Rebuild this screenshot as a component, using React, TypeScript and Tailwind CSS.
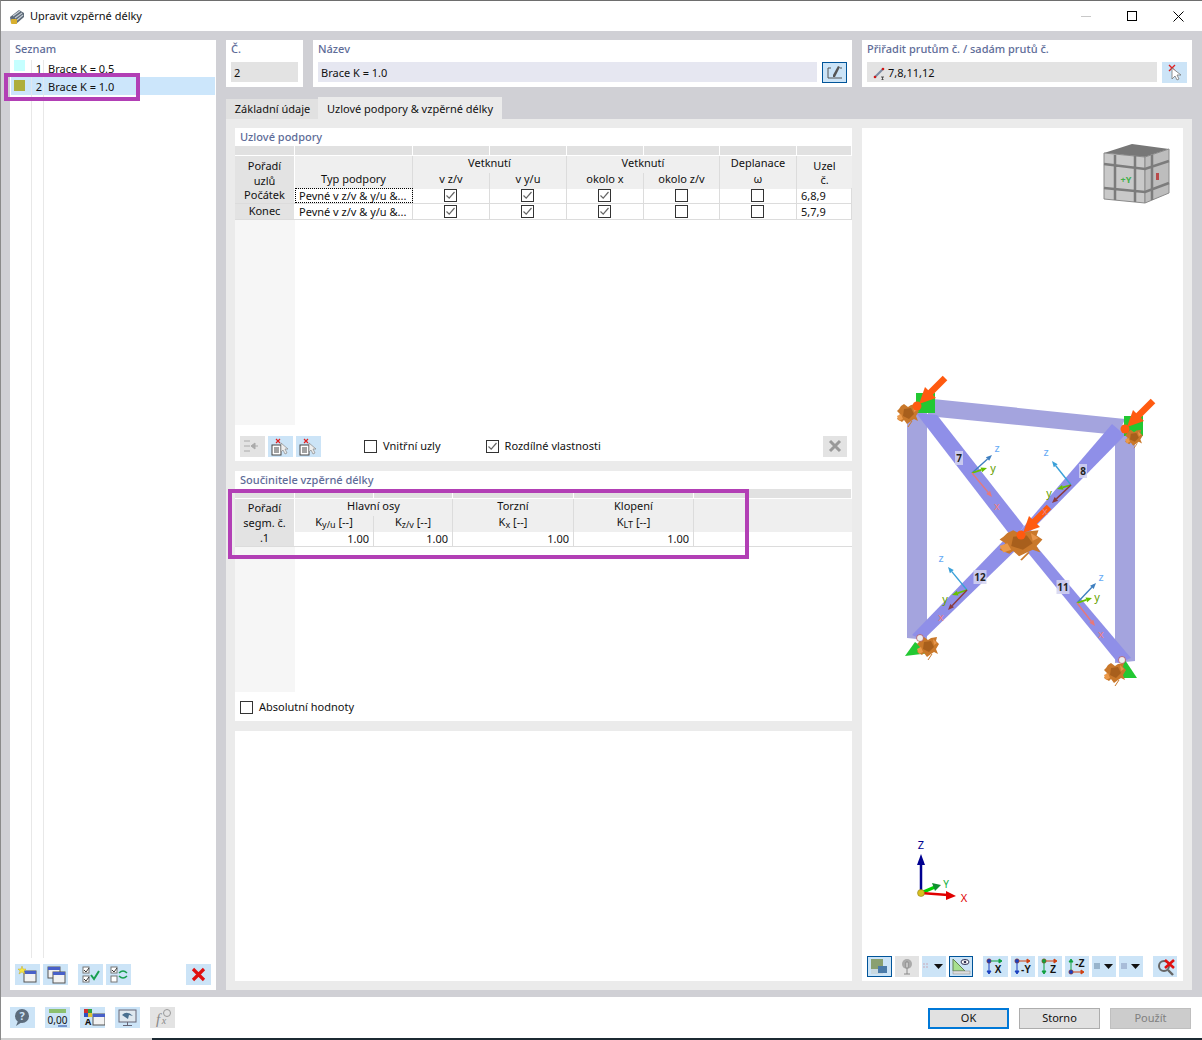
import type { ReactNode } from 'react'

const FONT = "font-['Noto_Sans',sans-serif]"
const LABEL = 'text-[11px] leading-[18px] font-medium text-[#5e6c98]'

function Ic({ children }: { children: ReactNode }) {
	return (
		<svg viewBox="0 0 25 21" width="25" height="21" className="block">
			{children}
		</svg>
	)
}

function IconBtn({ children, kind = 'blue', narrow }: { children?: ReactNode; kind?: 'blue' | 'gray' | 'active'; narrow?: boolean }) {
	const cls =
		kind === 'gray'
			? 'bg-[#e3e3e3]'
			: kind === 'active'
				? 'bg-[#cce4f7] outline outline-1 -outline-offset-1 outline-[#005499]'
				: 'bg-[#cce4f7]'
	return <div className={`${narrow ? 'w-[24px]' : 'w-[25px]'} h-[21px] shrink-0 overflow-hidden ${cls}`}>{children}</div>
}

function Check({ on }: { on: boolean }) {
	return (
		<svg viewBox="0 0 13 13" width="13" height="13" className="block">
			<rect x="0.5" y="0.5" width="12" height="12" fill="#fff" stroke="#333" />
			{on && <path d="M2.5 6.5 L5.2 9.2 L10.5 3" fill="none" stroke="#666" strokeWidth="1.2" />}
		</svg>
	)
}

function Title({ children }: { children: ReactNode }) {
	return <div className={`${LABEL} pl-[5px] h-[18px]`}>{children}</div>
}

function Strip({ cols }: { cols: string }) {
	const n = cols.split(' ')
	return (
		<div className="flex h-[9px] shrink-0">
			{n.map((w, i) => (
				<div key={i} style={{ width: w }} className="bg-[#e1e1e1] border-r border-white" />
			))}
		</div>
	)
}

function Head({ className = '', children }: { className?: string; children?: ReactNode }) {
	return (
		<div className={`bg-[#efefef] flex items-center justify-center leading-none border-[#dcdcdc] pb-[5px] ${className}`}>
			{children}
		</div>
	)
}

function NodeRow({ label, checks, nodes, focus }: { label: string; checks: boolean[]; nodes: string; focus?: boolean }) {
	return (
		<div className="grid grid-cols-[60px_118px_77px_77px_77px_76px_77px_55px] h-[16px] shrink-0 border-b border-[#dcdcdc] leading-none">
			<div className="bg-[#e3e3e3] border-r border-white flex items-center justify-center pb-[2px]">{label}</div>
			<div
				className={`flex items-center pl-[4px] whitespace-nowrap overflow-hidden border-r border-[#dcdcdc] ${focus ? 'outline-1 outline-dotted -outline-offset-1 outline-black' : ''}`}>
				Pevné v z/v &amp; y/u &amp;...
			</div>
			{checks.map((c, i) => (
				<div key={i} className="flex items-center justify-center pr-px border-r border-[#dcdcdc]">
					<Check on={c} />
				</div>
			))}
			<div className="flex items-center pl-[4px] border-r border-[#dcdcdc]">{nodes}</div>
		</div>
	)
}

function NumCell({ children }: { children?: ReactNode }) {
	return <div className="flex items-center justify-end pr-[4px] border-r border-[#dcdcdc]">{children}</div>
}

function Ksub({ sub }: { sub: string }) {
	return (
		<span>
			K<span className="text-[9px] relative top-[2px]">{sub}</span> [--]
		</span>
	)
}

function Blob({ x, y, s = 1, sx = 1 }: { x: number; y: number; s?: number; sx?: number }) {
	return (
		<g transform={`translate(${x} ${y}) scale(${s * sx} ${s})`}>
			<path d="M-9 -4 L-7 -7 L-4 -9 L0 -6 L3 -8 L9 -9 L8 -5 L11 -2 L8 3 L10 8 L6 6 L3 8 L-1 11 L-4 7 L-6 9 L-11 6 L-8 1 L-11 -2 Z" fill="#c9782a" />
			<path d="M-4 -4 L3 -5 L6 1 L1 6 L-5 3 Z" fill="#a85f1c" />
			<path d="M-11 3 L-7 1 L-5 6 L-9 8 Z" fill="#ec9a4a" />
			<path d="M5 -7 L9 -3 L6 -1 Z" fill="#e8954a" />
			<path d="M4 8 L0 14" stroke="#c9782a" strokeWidth="1" />
		</g>
	)
}

function Load({ x, y }: { x: number; y: number }) {
	return (
		<g>
			<path d={`M${x + 28} ${y - 28} L${x + 11} ${y - 11}`} stroke="#ff5a10" strokeWidth="6.5" />
			<path d={`M${x + 2} ${y - 2} L${x + 19} ${y - 8} L${x + 8} ${y - 19} Z`} fill="#ff5a10" />
			<circle cx={x} cy={y} r="4.5" fill="#ff5a10" />
		</g>
	)
}

type AxesP = {
	o: number[]
	z: number[]
	y: number[]
	x: number[]
	lz: number[]
	ly: number[]
	lx: number[]
	xc: string
	zc: string
}

function Axes({ o, z, y, x, lz, ly, lx, xc, zc }: AxesP) {
	const arrow = (p: number[], c: string, w = 1.4) => {
		const dx = p[0] - o[0]
		const dy = p[1] - o[1]
		const len = Math.hypot(dx, dy)
		const ux = dx / len
		const uy = dy / len
		const bx = p[0] - ux * 6
		const by = p[1] - uy * 6
		return (
			<g>
				<path d={`M${o[0]} ${o[1]} L${bx} ${by}`} stroke={c} strokeWidth={w} />
				<path d={`M${p[0]} ${p[1]} L${bx - uy * 2.5} ${by + ux * 2.5} L${bx + uy * 2.5} ${by - ux * 2.5} Z`} fill={c} />
			</g>
		)
	}
	return (
		<g>
			{arrow(z, zc)}
			{arrow(y, '#66c000', 1.8)}
			{arrow(x, xc)}
			<text x={lz[0]} y={lz[1]} fontSize="11" fill="#66aaf5" textAnchor="middle">z</text>
			<text x={ly[0]} y={ly[1]} fontSize="11" fill="#66a000" textAnchor="middle">y</text>
			<text x={lx[0]} y={lx[1]} fontSize="11" fill="#ee8080" textAnchor="middle">x</text>
		</g>
	)
}

function Tag({ x, y, t }: { x: number; y: number; t: string }) {
	const w = t.length > 1 ? 13 : 8
	return (
		<g>
			<rect x={x - w / 2} y={y - 7} width={w} height="14" fill="#d4d4f0" opacity="0.85" />
			<text x={x} y={y + 3.5} fontSize="10" fontWeight="700" fill="#222" textAnchor="middle">{t}</text>
		</g>
	)
}

function Viewer3D() {
	return (
		<svg viewBox="862 128 321 828" className="block w-[321px] h-[828px]" fontFamily="Noto Sans, sans-serif">
			{/* view cube */}
			<path d="M1104 153 L1132 144 L1169 149 L1145 157 Z" fill="#777" />
			<path d="M1104 153 L1145 157 L1145 203 L1104 199 Z" fill="#c9c9c9" stroke="#8a8a8a" />
			<path d="M1145 157 L1169 149 L1169 193 L1145 203 Z" fill="#bdbdbd" stroke="#8a8a8a" />
			<path d="M1104 164 L1145 169 L1169 161 M1104 188 L1145 192 L1169 183 M1115 155 L1115 200 M1135 156 L1135 202 M1152 155 L1152 200" fill="none" stroke="#7c7c7c" strokeWidth="2.5" />
			<text x="1126" y="183" fontSize="9" fontWeight="700" fill="#43b04a" textAnchor="middle">+Y</text>
			<rect x="1156" y="173" width="3" height="7" fill="#b84a4a" />

			{/* members */}
			<path d="M907 412 H927 V640 L907 638 Z" fill="#a4a4de" />
			<path d="M1115 425 H1135 V661 L1115 663 Z" fill="#a4a4de" />
			<path d="M933 399 L1125 419 L1118 435 L927 416 Z" fill="#a4a4de" />
			<path d="M916 413 L937 415 L1024 526 L1014 540 Z" fill="#8f8fe8" />
			<path d="M1112 424 L1125 435 L1030 532 L1014 538 Z" fill="#8f8fe8" />
			<path d="M1006 538 L1018 548 L923 640 L912 635 Z" fill="#8f8fe8" />
			<path d="M1020 543 L1037 547 L1131 658 L1118 663 Z" fill="#8f8fe8" />

			{/* supports */}
			<rect x="916" y="393" width="19" height="20" fill="#22c832" />
			<rect x="1124" y="416" width="19" height="20" fill="#22c832" />
			<path d="M905 656 L915 642 L930 653 Z" fill="#22c832" />
			<path d="M1113 678 L1125 660 L1137 678 Z" fill="#22c832" />
			<Blob x={908} y={413} />
			<Blob x={1134} y={437} s={0.8} />
			<Blob x={1021} y={542} s={1.3} sx={1.5} />
			<Blob x={928} y={646} />
			<Blob x={1115} y={672} />
			<circle cx="920" cy="638" r="3.5" fill="#eee" stroke="#a33" strokeWidth="0.6" />
			<circle cx="1122" cy="660" r="3.5" fill="#eee" stroke="#a33" strokeWidth="0.6" />
			<Load x={917} y={406} />
			<Load x={1125} y={429} />
			<Load x={1021} y={535} />

			{/* local axes */}
			<Axes o={[972, 473]} z={[992, 455]} y={[987, 468]} x={[992, 497]} lz={[997, 452]} ly={[993, 472]} lx={[997, 510]} xc="#e87878" zc="#3f7fc0" />
			<Axes o={[1071, 485]} z={[1052, 461]} y={[1057, 489]} x={[1052, 503]} lz={[1046, 456]} ly={[1049, 497]} lx={[1045, 515]} xc="#8a3a3a" zc="#3aa0d8" />
			<Axes o={[967, 590]} z={[948, 567]} y={[952, 595]} x={[948, 610]} lz={[941, 562]} ly={[945, 603]} lx={[941, 621]} xc="#8a3a3a" zc="#3aa0d8" />
			<Axes o={[1077, 603]} z={[1096, 583]} y={[1092, 598]} x={[1095, 626]} lz={[1101, 581]} ly={[1097, 601]} lx={[1101, 638]} xc="#e87878" zc="#3f7fc0" />
			<Tag x={959} y={458} t="7" />
			<Tag x={1083} y={471} t="8" />
			<Tag x={980} y={577} t="12" />
			<Tag x={1063} y={587} t="11" />

			{/* global axes */}
			<path d="M921 893 V862" stroke="#000090" strokeWidth="2.5" />
			<path d="M921 854 L917 865 H925 Z" fill="#000090" />
			<path d="M921 893 L935 887" stroke="#00d000" strokeWidth="3" />
			<path d="M941 885 L932 883 L935 891 Z" fill="#109030" />
			<path d="M921 893 L948 895" stroke="#e00000" strokeWidth="2.5" />
			<path d="M956 896 L946 891 L946 900 Z" fill="#e00000" />
			<circle cx="921" cy="893" r="3.5" fill="#d8c020" stroke="#807010" strokeWidth="0.5" />
			<text x="921" y="849" fontSize="11" fill="#000090" textAnchor="middle">Z</text>
			<text x="946" y="888" fontSize="10" fill="#10b040" textAnchor="middle">Y</text>
			<text x="964" y="902" fontSize="11" fill="#e00000" textAnchor="middle">X</text>
		</svg>
	)
}

function AxisIcon({ label, v, h, flip }: { label: string; v: string; h: string; flip?: boolean }) {
	return (
		<Ic>
			<circle cx="6" cy={flip ? 16 : 5} r="2.2" fill={flip ? '#1a40c0' : v} stroke="#b03000" strokeWidth="0.5" />
			{flip ? (
				<path d="M6 14 V5 M4 6 L6 3 L8 6 Z" stroke={v} fill={v} strokeWidth="1" />
			) : (
				<path d="M6 7 V17 M4 15 L6 18 L8 15 Z" stroke={v} fill={v} strokeWidth="1" />
			)}
			<path d={flip ? 'M8 16 H18 M16 14 L19 16 L16 18 Z' : 'M8 5 H18 M16 3 L19 5 L16 7 Z'} stroke={h} fill={h} strokeWidth="1" />
			<text x="15" y={flip ? 11 : 17} fontSize="10" fontWeight="700" fill="#111" textAnchor="middle" fontFamily="Liberation Sans, sans-serif">{label}</text>
		</Ic>
	)
}

function PickIcon() {
	return (
		<Ic>
			<path d="M7 3 L13 9 M13 3 L7 9" stroke="#e02020" strokeWidth="1.4" />
			<path d="M10 6 L10 17 L13 14 L15 18 L17 17 L15 13 L19 13 Z" fill="#fff" stroke="#777" strokeWidth="0.8" />
		</Ic>
	)
}

function DocPickIcon() {
	return (
		<Ic>
			<path d="M8 3 L12 7 M12 3 L8 7" stroke="#e02020" strokeWidth="1.2" />
			<rect x="4" y="9" width="9" height="10" fill="#fff" stroke="#444" />
			<path d="M6 12 H11 M6 14 H11 M6 16 H11" stroke="#444" />
			<path d="M13 7 L13 16 L15 14 L17 18 L19 17 L17 13 L20 13 Z" fill="#eee" stroke="#888" strokeWidth="0.7" />
		</Ic>
	)
}

function WinIcon({ x, y }: { x: number; y: number }) {
	return (
		<g>
			<rect x={x} y={y} width="12" height="11" fill="#f2f2f2" stroke="#555" />
			<rect x={x} y={y} width="12" height="3" fill="#4860c8" />
		</g>
	)
}

function CheckMini({ x, y, on }: { x: number; y: number; on: boolean }) {
	return (
		<g>
			<rect x={x} y={y} width="6" height="6" fill="#fff" stroke="#777" />
			{on && <path d={`M${x + 1} ${y + 3} L${x + 3} ${y + 5} L${x + 6} ${y + 1}`} fill="none" stroke="#333" />}
		</g>
	)
}

export default function App() {
	return (
		<div className={`${FONT} w-[1202px] h-[1040px] flex flex-col bg-white text-[11px] text-[#111] border-l border-t border-l-[#8a8a8a] border-t-[#6e6e6e] overflow-hidden relative`}>
			{/* title bar */}
			<div className="h-[30px] shrink-0 flex items-center pl-[8px] pr-px bg-white">
				<svg viewBox="0 0 16 16" width="16" height="16" className="mr-[5px] mt-px">
					<path d="M1 8 L10 1 L15 4 L15 8 L7 15 L2 14 Z" fill="#5d6a78" />
					<path d="M4 7 L11 2 M6 9 L13 4 M8 11 L14 6" stroke="#c7ced6" strokeWidth="1.1" />
					<rect x="2" y="10" width="6" height="5" rx="1" fill="#d8b030" />
				</svg>
				<span className="text-[11px] pt-px">Upravit vzpěrné délky</span>
				<div className="ml-auto flex items-center">
					<div className="w-[46px] flex justify-center">
						<div className="w-[10px] h-px bg-[#c8c8c8]" />
					</div>
					<div className="w-[46px] flex justify-center">
						<div className="w-[10px] h-[10px] border border-black" />
					</div>
					<div className="w-[46px] flex justify-center">
						<svg viewBox="0 0 11 11" width="11" height="11">
							<path d="M0.5 0.5 L10.5 10.5 M10.5 0.5 L0.5 10.5" stroke="#000" />
						</svg>
					</div>
				</div>
			</div>

			{/* body */}
			<div className="flex-1 min-h-0 bg-[#d0d0d5] flex gap-[10px] pl-[9px] pr-[9px] pt-[9px] pb-[7px]">
				{/* list */}
				<div className="w-[206px] bg-white flex flex-col">
					<div className={`${LABEL} pl-[5px] h-[20px] shrink-0`}>Seznam</div>
					<div className="flex h-[17px] shrink-0 items-center leading-none">
						<div className="w-[22px] h-full border-r border-[#e8e8e8] pl-[4px]">
							<div className="w-[11px] h-[11px] bg-[#c5ffff]" />
						</div>
						<div className="w-[12px] h-full border-r border-[#e8e8e8] flex items-center justify-end pr-px">1</div>
						<div className="pl-[4px]">Brace K = 0.5</div>
					</div>
					<div className="flex h-[18px] shrink-0 items-center leading-none bg-[#cce6fb] mx-px">
						<div className="w-[21px] h-full border-r border-[#e0e8f0] pl-[3px] pt-[3px]">
							<div className="w-[11px] h-[11px] bg-[#aeae3c]" />
						</div>
						<div className="w-[12px] h-full border-r border-[#e0e8f0] flex items-center justify-end pr-px">2</div>
						<div className="pl-[4px]">Brace K = 1.0</div>
					</div>
					<div className="flex-1 flex">
						<div className="w-[22px] border-r border-[#e8e8e8]" />
						<div className="w-[12px] border-r border-[#e8e8e8]" />
					</div>
					<div className="h-[32px] shrink-0 flex items-start pl-[5px] pt-[6px] gap-[3px]">
						<IconBtn>
							<Ic>
								<WinIcon x={9} y={7} />
								<path d="M7 2 L8 5 L11 5 L9 7 L10 10 L7 8 L4 10 L5 7 L3 5 L6 5 Z" fill="#f5e642" stroke="#c0a010" strokeWidth="0.4" />
							</Ic>
						</IconBtn>
						<IconBtn>
							<Ic>
								<WinIcon x={5} y={3} />
								<WinIcon x={10} y={8} />
							</Ic>
						</IconBtn>
						<div className="w-[4px]" />
						<IconBtn>
							<Ic>
								<CheckMini x={5} y={3} on />
								<CheckMini x={5} y={12} on />
								<path d="M13 11 L16 15 L21 7" fill="none" stroke="#1aa050" strokeWidth="2" />
							</Ic>
						</IconBtn>
						<IconBtn>
							<Ic>
								<CheckMini x={5} y={3} on />
								<CheckMini x={5} y={12} on={false} />
								<path d="M13 9 Q17 5 21 9 M21 12 Q17 16 13 12" fill="none" stroke="#1aa050" strokeWidth="1.5" />
							</Ic>
						</IconBtn>
						<div className="ml-auto mr-[5px]">
							<IconBtn>
								<Ic>
									<path d="M7 5 L18 16 M18 5 L7 16" stroke="#e01010" strokeWidth="3.2" />
								</Ic>
							</IconBtn>
						</div>
					</div>
				</div>

				{/* right side */}
				<div className="w-[966px] flex flex-col">
					<div className="flex gap-[10px] h-[47px] shrink-0">
						<div className="w-[77px] bg-white pl-[5px] pr-[5px]">
							<div className={`${LABEL} h-[22px]`}>Č.</div>
							<div className="h-[20px] bg-[#e3e3e3] flex items-center pl-[3px] pt-[2px]">2</div>
						</div>
						<div className="w-[539px] bg-white pl-[5px] pr-[5px]">
							<div className={`${LABEL} h-[22px]`}>Název</div>
							<div className="flex gap-[5px]">
								<div className="flex-1 h-[20px] bg-[#e6e7f1] flex items-center pl-[3px] pt-[2px]">Brace K = 1.0</div>
								<div className="w-[25px] h-[21px] bg-[#cce4f7] border border-[#005499]">
									<svg viewBox="0 0 23 19" width="23" height="19" className="block">
										<path d="M8 5 H5 V15 H19 M17 5 H19" fill="none" stroke="#555" />
										<path d="M12 14 L10 14 L10 12 L15 3 L17 4 Z" fill="#555" />
									</svg>
								</div>
							</div>
						</div>
						<div className="w-[330px] bg-white pl-[5px] pr-[5px]">
							<div className={`${LABEL} h-[22px]`}>Přiřadit prutům č. / sadám prutů č.</div>
							<div className="flex gap-[5px]">
								<div className="flex-1 h-[20px] bg-[#e3e3e3] flex items-center pl-[6px] gap-[2px] pt-[2px]">
									<svg viewBox="0 0 13 13" width="13" height="13">
										<path d="M2 10 L10 2" stroke="#7a8aa0" strokeWidth="2" />
										<circle cx="2" cy="10" r="1.3" fill="#d01818" />
										<circle cx="10" cy="2" r="1.3" fill="#d01818" />
										<path d="M8 10 H11 M9.5 10 V13 M8 13 H11" stroke="#333" strokeWidth="0.8" />
									</svg>
									<span>7,8,11,12</span>
								</div>
								<IconBtn>
									<PickIcon />
								</IconBtn>
							</div>
						</div>
					</div>

					{/* tabs */}
					<div className="flex items-end h-[32px] shrink-0 pt-[10px]">
						<div className="w-[92px] h-[20px] bg-[#e1e1e1] flex items-center justify-center whitespace-nowrap pl-px pt-px">Základní údaje</div>
						<div className="w-[184px] h-[22px] bg-[#ebebeb] flex items-center justify-center whitespace-nowrap pt-[3px]">Uzlové podpory &amp; vzpěrné délky</div>
					</div>

					<div className="flex-1 min-h-0 bg-[#ebebeb] p-[9px] flex gap-[10px]">
						<div className="w-[617px] flex flex-col gap-[10px]">
							{/* nodal supports */}
							<div className="h-[333px] shrink-0 bg-white flex flex-col">
								<Title>Uzlové podpory</Title>
								<Strip cols="60px 118px 77px 77px 77px 76px 77px 55px" />
								<div className="grid grid-cols-[60px_118px_77px_77px_77px_76px_77px_55px] grid-rows-[17px_16px] h-[33px] shrink-0 border-t border-b border-t-white border-b-[#dcdcdc]">
									<div className="row-span-2 bg-[#e3e3e3] border-r border-white flex flex-col items-center justify-center leading-[15px]">
										<span>Pořadí</span>
										<span>uzlů</span>
									</div>
									<Head className="row-span-2 border-r items-end">Typ podpory</Head>
									<Head className="col-span-2 border-r">Vetknutí</Head>
									<Head className="col-span-2 border-r">Vetknutí</Head>
									<Head className="border-r">Deplanace</Head>
									<div className="row-span-2 bg-[#efefef] flex flex-col items-center justify-center leading-[14px]">
										<span>Uzel</span>
										<span>č.</span>
									</div>
									<Head className="border-r">v z/v</Head>
									<Head className="border-r">v y/u</Head>
									<Head className="border-r">okolo x</Head>
									<Head className="border-r">okolo z/v</Head>
									<Head className="border-r">ω</Head>
								</div>
								<NodeRow label="Počátek" focus checks={[true, true, true, false, false]} nodes="6,8,9" />
								<NodeRow label="Konec" checks={[true, true, true, false, false]} nodes="5,7,9" />
								<div className="flex-1 min-h-0">
									<div className="w-[60px] h-full bg-[#f6f6f6]" />
								</div>
								<div className="h-[36px] shrink-0 flex items-start pt-[11px] pl-[5px] pr-[5px]">
									<IconBtn kind="gray">
										<Ic>
											<path d="M4 5 H10 M4 10 H10 M4 15 H10 M18 10 H12 M15 7 L11 10 L15 13 Z" stroke="#aaa" fill="#aaa" />
										</Ic>
									</IconBtn>
									<div className="w-[3px]" />
									<IconBtn>
										<DocPickIcon />
									</IconBtn>
									<div className="w-[3px]" />
									<IconBtn>
										<DocPickIcon />
									</IconBtn>
									<label className="flex items-center ml-[43px] h-[21px] gap-[6px]">
										<Check on={false} />
										<span>Vnitřní uzly</span>
									</label>
									<label className="flex items-center ml-[45px] h-[21px] gap-[6px]">
										<Check on />
										<span>Rozdílné vlastnosti</span>
									</label>
									<div className="ml-auto w-[24px] h-[21px] bg-[#e3e3e3]">
										<svg viewBox="0 0 24 21" width="24" height="21" className="block">
											<path d="M7 5 L17 15 M17 5 L7 15" stroke="#999" strokeWidth="3" />
										</svg>
									</div>
								</div>
							</div>

							{/* buckling factors */}
							<div className="h-[250px] shrink-0 bg-white flex flex-col">
								<Title>Součinitele vzpěrné délky</Title>
								<Strip cols="60px 79px 79px 121px 120px 158px" />
								<div className="grid grid-cols-[60px_79px_79px_121px_120px_158px] grid-rows-[17px_16px] h-[33px] shrink-0 border-t border-b border-t-white border-b-[#dcdcdc]">
									<div className="row-span-2 bg-[#e3e3e3] border-r border-white flex flex-col items-center justify-center leading-[15px] pb-px">
										<span>Pořadí</span>
										<span>segm. č.</span>
									</div>
									<Head className="col-span-2 border-r">Hlavní osy</Head>
									<Head className="border-r">Torzní</Head>
									<Head className="border-r">Klopení</Head>
									<div className="row-span-2 bg-[#efefef]" />
									<Head className="border-r"><Ksub sub="y/u" /></Head>
									<Head className="border-r"><Ksub sub="z/v" /></Head>
									<Head className="border-r"><Ksub sub="x" /></Head>
									<Head className="border-r"><Ksub sub="LT" /></Head>
								</div>
								<div className="grid grid-cols-[60px_79px_79px_121px_120px_158px] h-[16px] shrink-0 border-b border-[#dcdcdc] leading-none">
									<div className="bg-[#e3e3e3] border-r border-white flex items-center justify-center pb-[2px]">.1</div>
									<NumCell>1.00</NumCell>
									<NumCell>1.00</NumCell>
									<NumCell>1.00</NumCell>
									<NumCell>1.00</NumCell>
									<div />
								</div>
								<div className="flex-1 min-h-0">
									<div className="w-[60px] h-full bg-[#f6f6f6]" />
								</div>
								<label className="h-[29px] shrink-0 flex items-center pl-[5px] pt-px gap-[6px]">
									<Check on={false} />
									<span>Absolutní hodnoty</span>
								</label>
							</div>

							<div className="flex-1 bg-white" />
						</div>

						{/* viewer */}
						<div className="w-[321px] bg-white flex flex-col">
							<Viewer3D />
							<div className="flex gap-[3px] pl-[5px] h-[25px] items-start">
								<IconBtn kind="active">
									<Ic>
										<rect x="4" y="3" width="12" height="10" fill="#8aa070" />
										<rect x="4" y="13" width="12" height="5" fill="#c8d8e0" />
										<rect x="11" y="10" width="9" height="7" fill="#4a7aa8" />
									</Ic>
								</IconBtn>
								<IconBtn kind="gray" narrow>
									<Ic>
										<circle cx="12" cy="8" r="5" fill="#aaa" />
										<path d="M11 6 H13 V12 H11 Z M12 13 V18 M9 18 H15" stroke="#888" fill="#fff" />
									</Ic>
								</IconBtn>
								<IconBtn narrow>
									<Ic>
										<path d="M1 8 H7 M1 11 H7" stroke="#c8a8b8" strokeDasharray="2 1" />
										<path d="M12 8 H21 L16.5 13 Z" fill="#111" />
									</Ic>
								</IconBtn>
								<IconBtn kind="active" narrow>
									<Ic>
										<path d="M4 3 L16 15 H4 Z" fill="#a8e090" stroke="#608050" />
										<rect x="4" y="15" width="17" height="3" fill="#ddd" stroke="#888" strokeWidth="0.5" />
										<ellipse cx="16" cy="6" rx="4" ry="2.5" fill="#fff" stroke="#335" />
										<circle cx="16" cy="6" r="1.3" fill="#335" />
									</Ic>
								</IconBtn>
								<div className="w-[4px]" />
								<IconBtn><AxisIcon label="X" v="#1a40c0" h="#10a040" /></IconBtn>
								<IconBtn narrow><AxisIcon label="-Y" v="#1a40c0" h="#d04010" /></IconBtn>
								<IconBtn narrow><AxisIcon label="Z" v="#10a040" h="#d04010" /></IconBtn>
								<IconBtn narrow><AxisIcon label="-Z" v="#10a040" h="#d04010" flip /></IconBtn>
								<IconBtn narrow>
									<Ic>
										<rect x="2" y="7" width="6" height="6" fill="#98b4cc" />
										<path d="M12 8 H21 L16.5 13 Z" fill="#111" />
									</Ic>
								</IconBtn>
								<IconBtn narrow>
									<Ic>
										<rect x="2" y="7" width="6" height="6" fill="#a8bcd8" />
										<path d="M12 8 H21 L16.5 13 Z" fill="#111" />
									</Ic>
								</IconBtn>
								<div className="w-[4px]" />
								<IconBtn narrow>
									<Ic>
										<circle cx="11" cy="10" r="5" fill="none" stroke="#666" strokeWidth="2" />
										<path d="M15 14 L20 19" stroke="#666" strokeWidth="2.4" />
										<path d="M12 4 L21 12 M21 4 L12 12" stroke="#e01010" strokeWidth="2.6" />
									</Ic>
								</IconBtn>
							</div>
						</div>
					</div>
				</div>
			</div>

			{/* footer */}
			<div className="h-[41px] shrink-0 bg-white flex items-start pl-[9px] pr-[11px] pt-[10px]">
				<div className="flex gap-[10px]">
					<IconBtn>
						<Ic>
							<circle cx="12" cy="9" r="7" fill="#5c6c7c" />
							<path d="M8 14 L6 19 L12 15 Z" fill="#5c6c7c" />
							<text x="12" y="13" fontSize="11" fontWeight="700" fill="#cce4f7" textAnchor="middle">?</text>
						</Ic>
					</IconBtn>
					<IconBtn>
						<Ic>
							<rect x="4" y="2" width="17" height="4" fill="#8cc070" />
							<text x="12.5" y="17" fontSize="10" fill="#111" textAnchor="middle">0,00</text>
							<path d="M13 19 H22" stroke="#1a40a0" />
						</Ic>
					</IconBtn>
					<IconBtn>
						<Ic>
							<rect x="4" y="2" width="4" height="4" fill="#d03030" />
							<rect x="8" y="2" width="4" height="4" fill="#30a040" />
							<rect x="4" y="6" width="4" height="4" fill="#3050c0" />
							<rect x="8" y="6" width="4" height="4" fill="#e0c030" />
							<WinIcon x={13} y={7} />
							<text x="8" y="18" fontSize="9" fontWeight="700" fill="#111" textAnchor="middle">A</text>
						</Ic>
					</IconBtn>
					<IconBtn>
						<Ic>
							<rect x="4" y="3" width="17" height="12" fill="#dfe8ef" stroke="#667" />
							<path d="M7 8 Q12 3 18 9 L14 8 L13 12 Z" fill="#4a7090" />
							<path d="M12.5 15 V18 M8 18.5 H17" stroke="#667" />
						</Ic>
					</IconBtn>
					<IconBtn kind="gray">
						<Ic>
							<text x="8" y="17" fontSize="15" fontStyle="italic" fill="#888" textAnchor="middle" fontFamily="Liberation Serif, serif">f</text>
							<text x="14" y="17" fontSize="10" fontStyle="italic" fill="#888" textAnchor="middle" fontFamily="Liberation Serif, serif">x</text>
							<circle cx="17" cy="6" r="3.5" fill="none" stroke="#999" />
						</Ic>
					</IconBtn>
				</div>
				<div className="ml-auto flex gap-[10px] items-start pt-px">
					<div className="w-[81px] h-[21px] bg-[#e1e1e1] border-2 border-[#0078d7] flex items-center justify-center">OK</div>
					<div className="w-[81px] h-[21px] bg-[#e1e1e1] border border-[#adadad] flex items-center justify-center">Storno</div>
					<div className="w-[81px] h-[21px] bg-[#cccccc] border border-[#bfbfbf] text-[#808080] flex items-center justify-center">Použít</div>
				</div>
			</div>
			<div className="h-[2px] shrink-0 flex">
				<div className="w-[151px] bg-[#d0d0d0]" />
				<div className="flex-1 bg-[#1c2a33]" />
			</div>

			{/* highlight frames */}
			<div className="absolute left-[3px] top-[72px] w-[136px] h-[28px] border-[4px] border-[#b23fb5] pointer-events-none" />
			<div className="absolute left-[227px] top-[488px] w-[521px] h-[70px] border-[4px] border-[#b23fb5] pointer-events-none" />
		</div>
	)
}
